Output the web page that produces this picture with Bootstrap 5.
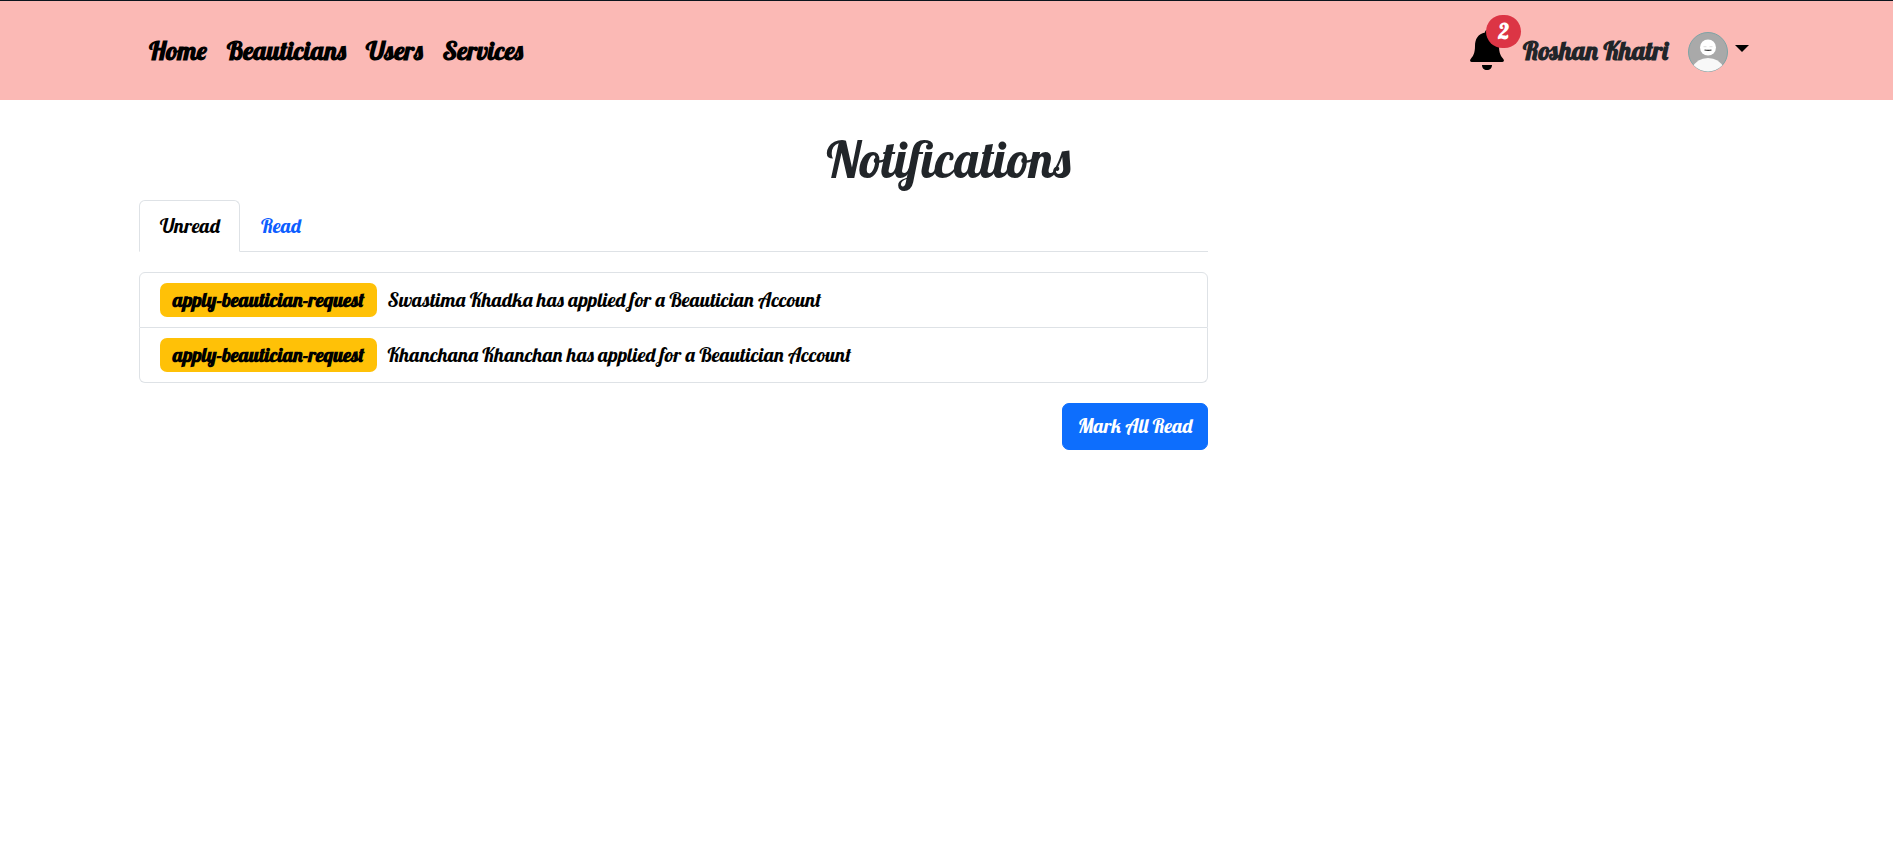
<!DOCTYPE html>
<html lang="en">
<head>
<meta charset="utf-8">
<title>Notifications</title>
<link href="https://cdn.jsdelivr.net/npm/bootstrap@5.3.0/dist/css/bootstrap.min.css" rel="stylesheet">
<style>
body{font-family:Lobster,"Liberation Serif",serif;font-size:20px;font-weight:400;color:#000}
.page-wrap{width:1616px;margin-left:139px}
.topbar{height:100px;background:#fbb9b5;border-top:1px solid #0b141d;font-size:26px;line-height:40px;font-weight:700}
.topbar .navbar-nav{padding-left:10px;gap:20px;margin-top:1px}
.topbar .nav-link{padding:0;color:#000;white-space:nowrap}
.user-area{margin-right:6px;margin-top:1px}
.bell{width:34px;height:42px;margin-right:20px}
.bell svg{display:block}
.count{position:absolute;left:16px;top:-15px;width:35px;height:33px;border-radius:17.5px;background:#dc3545;color:#fff;font-size:21px;line-height:33px;text-align:center}
.user-name{color:#212529;margin-right:20px;margin-left:-1px;white-space:nowrap}
.avatar{margin-top:2px}
.caret{border:7px solid transparent;border-top-color:#000;border-bottom:0;margin-left:7px;margin-top:-5px}
.page-title{font-size:50px;line-height:60px;font-weight:500;color:#212529;padding:30px 0 10px 3px;margin:0}
.panel-main{width:1069px}
.nav-tabs .nav-link{height:52px;padding:10px 20px;line-height:30px;color:#0d5eff}
.nav-tabs .nav-link.active{color:#000;width:101px}
.nav-tabs{height:52px}
.list-group{margin-top:20px}
.list-group-item{height:55px;padding:0 20px;color:#000;display:flex;align-items:center;white-space:nowrap}
.list-group-item:first-child{height:56px}
.tag{width:217px;height:34px;background:#ffc107;border-radius:7px;text-align:center;line-height:33px;margin-right:10.5px;font-weight:700}
.btn-read{width:146px;height:47px;margin-top:20px;font:inherit;border-radius:7px;padding:0 0 2px}
</style>
<script src="https://cdn.jsdelivr.net/npm/bootstrap@5.3.0/dist/js/bootstrap.bundle.min.js"></script>
</head>
<body>
<nav class="topbar">
  <div class="page-wrap d-flex justify-content-between h-100 align-items-center">
    <div class="navbar-nav flex-row">
      <a class="nav-link" href="#">Home</a>
      <a class="nav-link" href="#">Beauticians</a>
      <a class="nav-link" href="#">Users</a>
      <a class="nav-link" href="#">Services</a>
    </div>
    <div class="user-area d-flex align-items-center">
      <div class="bell position-relative">
        <svg width="34" height="42" viewBox="0 0 34 42"><path d="M17 0c1.400 0 2 1 2 2.500C26 4 29 9 29 16c0 7 1.800 10 4.300 13 1.200 1.500.5 3-.9 3H1.600C.2 32-.5 30.500.7 29 3.200 26 5 23 5 16 5 9 8 4 15 2.500 15 1 15.600 0 17 0zM12 35h10c0 3-2 5-5 5s-5-2-5-5z"/></svg>
        <span class="count">2</span>
      </div>
      <span class="user-name">Roshan Khatri</span>
      <svg class="avatar" width="40" height="40" viewBox="0 0 40 40"><defs><clipPath id="round"><circle cx="20" cy="20" r="19.500"/></clipPath></defs><circle cx="20" cy="20" r="19.500" fill="#a9a9a9" stroke="#7ea3a5"/><g clip-path="url(#round)"><path d="M4 36Q9 26 20 26T36 36V40H4z" fill="#f8f8f8"/></g><circle cx="20" cy="15.500" r="8" fill="#fff"/><path d="M15.500 14.700h3M21.500 14.700h3" stroke="#ddd"/><path d="M16.500 18q4 .8 7 0" stroke="#333" fill="none" stroke-width="1.200"/></svg>
      <span class="caret"></span>
    </div>
  </div>
</nav>
<main class="page-wrap">
  <h1 class="page-title text-center">Notifications</h1>
  <div class="panel-main">
    <ul class="nav nav-tabs">
      <li class="nav-item"><a class="nav-link active" href="#">Unread</a></li>
      <li class="nav-item"><a class="nav-link" href="#">Read</a></li>
    </ul>
    <ul class="list-group">
      <li class="list-group-item"><span class="tag">apply-beautician-request</span><span>Swastima Khadka has applied for a Beautician Account</span></li>
      <li class="list-group-item"><span class="tag">apply-beautician-request</span><span>Khanchana Khanchan has applied for a Beautician Account</span></li>
    </ul>
    <div class="d-flex justify-content-end"><button class="btn btn-primary btn-read">Mark All Read</button></div>
  </div>
</main>
</body>
</html>
